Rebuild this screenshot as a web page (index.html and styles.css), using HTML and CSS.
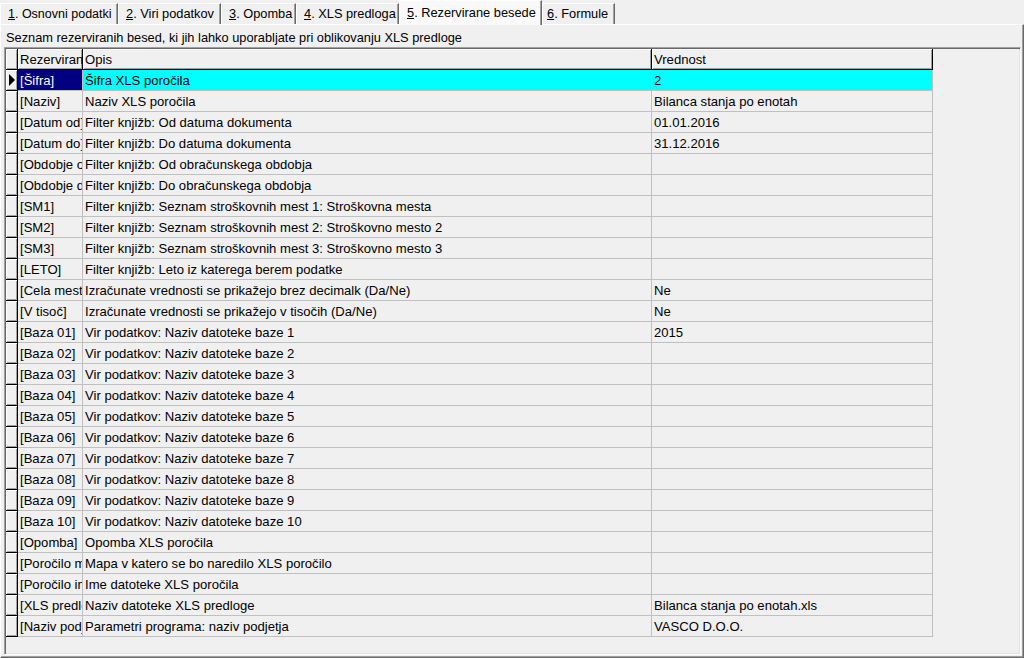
FILE: index.html
```html
<!DOCTYPE html>
<html>
<head>
<meta charset="utf-8">
<link rel="stylesheet" href="styles.css">
</head>
<body>
<div class="window">
  <div class="tabs">
    <div class="tab t1"><u>1</u>. Osnovni podatki</div>
    <div class="tab t2"><u>2</u>. Viri podatkov</div>
    <div class="tab t3"><u>3</u>. Opomba</div>
    <div class="tab t4"><u>4</u>. XLS predloga</div>
    <div class="tab active t5"><u>5</u>. Rezervirane besede</div>
    <div class="tab t6"><u>6</u>. Formule</div>
  </div>
  <div class="page">
    <div class="caption">Seznam rezerviranih besed, ki jih lahko uporabljate pri oblikovanju XLS predloge</div>
    <div class="grid">
      <div class="row head">
        <div class="ind"></div>
        <div class="c1">Rezerviran</div>
        <div class="c2">Opis</div>
        <div class="c3">Vrednost</div>
      </div>
      <div class="row sel">
        <div class="ind"><span class="arrow"></span></div>
        <div class="c1">[Šifra]</div>
        <div class="c2">Šifra XLS poročila</div>
        <div class="c3">2</div>
      </div>
      <div class="row"><div class="ind"></div><div class="c1">[Naziv]</div><div class="c2">Naziv XLS poročila</div><div class="c3">Bilanca stanja po enotah</div></div>
      <div class="row"><div class="ind"></div><div class="c1">[Datum od]</div><div class="c2">Filter knjižb: Od datuma dokumenta</div><div class="c3">01.01.2016</div></div>
      <div class="row"><div class="ind"></div><div class="c1">[Datum do]</div><div class="c2">Filter knjižb: Do datuma dokumenta</div><div class="c3">31.12.2016</div></div>
      <div class="row"><div class="ind"></div><div class="c1">[Obdobje od]</div><div class="c2">Filter knjižb: Od obračunskega obdobja</div><div class="c3"></div></div>
      <div class="row"><div class="ind"></div><div class="c1">[Obdobje do]</div><div class="c2">Filter knjižb: Do obračunskega obdobja</div><div class="c3"></div></div>
      <div class="row"><div class="ind"></div><div class="c1">[SM1]</div><div class="c2">Filter knjižb: Seznam stroškovnih mest 1: Stroškovna mesta</div><div class="c3"></div></div>
      <div class="row"><div class="ind"></div><div class="c1">[SM2]</div><div class="c2">Filter knjižb: Seznam stroškovnih mest 2: Stroškovno mesto 2</div><div class="c3"></div></div>
      <div class="row"><div class="ind"></div><div class="c1">[SM3]</div><div class="c2">Filter knjižb: Seznam stroškovnih mest 3: Stroškovno mesto 3</div><div class="c3"></div></div>
      <div class="row"><div class="ind"></div><div class="c1">[LETO]</div><div class="c2">Filter knjižb: Leto iz katerega berem podatke</div><div class="c3"></div></div>
      <div class="row"><div class="ind"></div><div class="c1">[Cela mesta]</div><div class="c2">Izračunate vrednosti se prikažejo brez decimalk (Da/Ne)</div><div class="c3">Ne</div></div>
      <div class="row"><div class="ind"></div><div class="c1">[V tisoč]</div><div class="c2">Izračunate vrednosti se prikažejo v tisočih (Da/Ne)</div><div class="c3">Ne</div></div>
      <div class="row"><div class="ind"></div><div class="c1">[Baza 01]</div><div class="c2">Vir podatkov: Naziv datoteke baze 1</div><div class="c3">2015</div></div>
      <div class="row"><div class="ind"></div><div class="c1">[Baza 02]</div><div class="c2">Vir podatkov: Naziv datoteke baze 2</div><div class="c3"></div></div>
      <div class="row"><div class="ind"></div><div class="c1">[Baza 03]</div><div class="c2">Vir podatkov: Naziv datoteke baze 3</div><div class="c3"></div></div>
      <div class="row"><div class="ind"></div><div class="c1">[Baza 04]</div><div class="c2">Vir podatkov: Naziv datoteke baze 4</div><div class="c3"></div></div>
      <div class="row"><div class="ind"></div><div class="c1">[Baza 05]</div><div class="c2">Vir podatkov: Naziv datoteke baze 5</div><div class="c3"></div></div>
      <div class="row"><div class="ind"></div><div class="c1">[Baza 06]</div><div class="c2">Vir podatkov: Naziv datoteke baze 6</div><div class="c3"></div></div>
      <div class="row"><div class="ind"></div><div class="c1">[Baza 07]</div><div class="c2">Vir podatkov: Naziv datoteke baze 7</div><div class="c3"></div></div>
      <div class="row"><div class="ind"></div><div class="c1">[Baza 08]</div><div class="c2">Vir podatkov: Naziv datoteke baze 8</div><div class="c3"></div></div>
      <div class="row"><div class="ind"></div><div class="c1">[Baza 09]</div><div class="c2">Vir podatkov: Naziv datoteke baze 9</div><div class="c3"></div></div>
      <div class="row"><div class="ind"></div><div class="c1">[Baza 10]</div><div class="c2">Vir podatkov: Naziv datoteke baze 10</div><div class="c3"></div></div>
      <div class="row"><div class="ind"></div><div class="c1">[Opomba]</div><div class="c2">Opomba XLS poročila</div><div class="c3"></div></div>
      <div class="row"><div class="ind"></div><div class="c1">[Poročilo mapa]</div><div class="c2">Mapa v katero se bo naredilo XLS poročilo</div><div class="c3"></div></div>
      <div class="row"><div class="ind"></div><div class="c1">[Poročilo ime]</div><div class="c2">Ime datoteke XLS poročila</div><div class="c3"></div></div>
      <div class="row"><div class="ind"></div><div class="c1">[XLS predloga]</div><div class="c2">Naziv datoteke XLS predloge</div><div class="c3">Bilanca stanja po enotah.xls</div></div>
      <div class="row"><div class="ind"></div><div class="c1">[Naziv podjetja]</div><div class="c2">Parametri programa: naziv podjetja</div><div class="c3">VASCO D.O.O.</div></div>
    </div>
  </div>
</div>
</body>
</html>
```
FILE: styles.css
```css
* { box-sizing: border-box; }
html, body { margin: 0; padding: 0; }
body {
  background: #f0f0f0;
  font-family: "Liberation Sans", Arial, sans-serif;
  font-size: 12.8px;
  color: #000;
  width: 1024px;
  height: 658px;
  overflow: hidden;
}
.window { width: 1024px; height: 658px; display: flex; flex-direction: column; }

.tabs {
  height: 24px;
  display: flex;
  align-items: flex-end;
  position: relative;
  z-index: 2;
}
.tab {
  height: 21px;
  line-height: 20px;
  padding: 0 0 0 8px;
  background: #f0f0f0;
  border-top: 1px solid #fff;
  border-left: 1px solid #fff;
  border-right: 1px solid #696969;
  box-shadow: inset -1px 0 #a0a0a0;
  white-space: nowrap;
  overflow: hidden;
}
.tab u { text-decoration: underline; text-underline-offset: 1px; }
.t1 { width: 118px; padding-left: 7px; font-size: 12.5px; }
.t2 { width: 103px; padding-left: 7px; }
.t3 { width: 75px; padding-left: 7px; }
.t4 { width: 103px; padding-left: 7px; }
.t5 { width: 143px; }
.t6 { width: 73px; padding-left: 4px; }
.tab.active {
  height: 25px;
  margin-bottom: -1px;
  line-height: 24px;
  background: #f9f9f9;
  padding-left: 7px;
}

.page {
  flex: 1;
  border-top: 1px solid #fff;
  border-left: 1px solid #fff;
  border-right: 1px solid #696969;
  border-bottom: 1px solid #696969;
  box-shadow: inset -1px -1px #a0a0a0;
  padding: 3px 2px 2px 3px;
  display: flex;
  flex-direction: column;
  min-height: 0;
}
.caption {
  height: 19px;
  line-height: 20px;
  padding-left: 2px;
  white-space: nowrap;
}
.grid {
  flex: 1;
  font-size: 13.1px;
  border-top: 1px solid #a0a0a0;
  border-left: 1px solid #a0a0a0;
  border-right: 1px solid #fff;
  border-bottom: 1px solid #fff;
  box-shadow: inset 1px 1px #696969, inset -1px -1px #e3e3e3;
  padding: 1px;
  overflow: hidden;
}
.row {
  display: grid;
  grid-template-columns: 12px 65px 569px 281px;
  height: 21px;
  line-height: 21px;
}
.row > div {
  border-right: 1px solid #c0c0c0;
  border-bottom: 1px solid #c0c0c0;
  white-space: nowrap;
  overflow: hidden;
  padding-left: 2px;
}
.row > .ind {
  padding: 0;
  border-right: 1px solid #000;
  border-bottom: 1px solid #000;
  box-shadow: inset 1px 1px #fff, inset -1px -1px #a0a0a0;
  position: relative;
}
.head > div {
  border-right: 1px solid #000;
  border-bottom: 1px solid #000;
  box-shadow: inset 1px 1px #fff, inset -1px -1px #a0a0a0;
}
.sel .c1 { background: #000080; color: #fff; }
.sel .c2, .sel .c3 { background: #00ffff; }
.arrow {
  position: absolute;
  left: 3px;
  top: 4px;
  width: 0;
  height: 0;
  border-top: 6px solid transparent;
  border-bottom: 6px solid transparent;
  border-left: 6px solid #000;
}
```
